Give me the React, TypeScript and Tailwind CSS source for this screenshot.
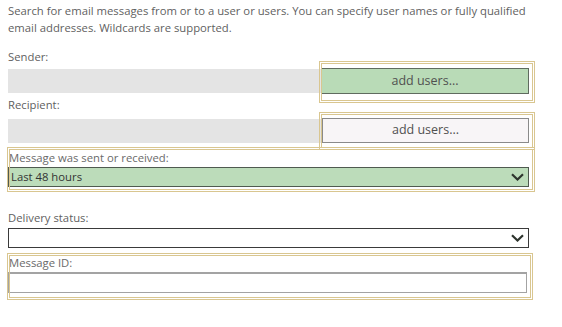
import React from "react";

function Chevron() {
  return (
    <svg
      width="13"
      height="8"
      viewBox="0 0 13 8"
      className="mr-[4px] shrink-0"
      fill="none"
      stroke="#2e352e"
      strokeWidth="2.2"
    >
      <path d="M1 1.2 L6.5 6.5 L12 1.2" />
    </svg>
  );
}

function Frame({ className }: { className: string }) {
  return (
    <div
      className={`pointer-events-none absolute border-[3px] border-double border-[#d9c690] ${className}`}
    />
  );
}

export default function App() {
  return (
    <div
      className="h-[327px] w-[562px] bg-white pl-[8px] text-[11.3px] text-[#5f5f5f]"
      style={{ fontFamily: "'Open Sans', 'Noto Sans', sans-serif" }}
    >
      <p className="pt-[2px] leading-[17px]">
        Search for email messages from or to a user or users. You can specify user names or fully qualified
        <br />
        email addresses. Wildcards are supported.
      </p>

      <div className="mt-[12px] h-[17px] leading-[17px]">Sender:</div>
      <div className="mt-[3px] flex h-[26px] w-[521px] items-center">
        <div className="h-[24px] w-[313px] bg-[#e4e4e4]" />
        <div className="relative h-[26px] flex-1">
          <Frame className="-top-[7px] -bottom-[9px] -left-[2px] -right-[6px]" />
          <button className="flex h-full w-full items-center justify-center border border-[#5f6b5f] bg-[#b9dbb7] text-[12.5px] text-[#505050]">
            add users...
          </button>
        </div>
      </div>

      <div className="mt-[2px] h-[17px] leading-[17px]">Recipient:</div>
      <div className="mt-[5px] flex h-[25px] w-[521px] items-center">
        <div className="h-[24px] w-[314px] bg-[#e4e4e4]" />
        <div className="relative h-[25px] flex-1">
          <Frame className="-top-[6px] -bottom-[7px] -left-[3px] -right-[6px]" />
          <button className="flex h-full w-full items-center justify-center border border-[#8a8a8a] bg-[#f8f5f7] text-[12.5px] text-[#505050]">
            add users...
          </button>
        </div>
      </div>

      <div className="relative mt-[6px] w-[521px]">
        <Frame className="-top-[2px] -bottom-[5px] -left-[1px] -right-[6px]" />
        <div className="h-[17px] pl-[1px] leading-[17px] text-[#6a6a6a]">Message was sent or received:</div>
        <div className="mt-[1px] flex h-[20px] items-center justify-between border border-[#4f5a4f] bg-[#bcdcba] pl-[2px] text-[#333]">
          <span>Last 48 hours</span>
          <Chevron />
        </div>
      </div>

      <div className="mt-[22px] h-[17px] leading-[17px]">Delivery status:</div>
      <div className="mt-[2px] flex h-[20px] w-[521px] items-center justify-end border border-[#3a3a3a] bg-white">
        <Chevron />
      </div>

      <div className="relative mt-[6px] w-[519px]">
        <Frame className="-top-[1px] -bottom-[7px] -left-[1px] -right-[6px]" />
        <div className="h-[17px] pl-[1px] leading-[17px] text-[#6a6a6a]">Message ID:</div>
        <div className="mt-[1px] h-[21px] border border-t-2 border-[#a3a3a3] bg-white" />
      </div>
    </div>
  );
}
